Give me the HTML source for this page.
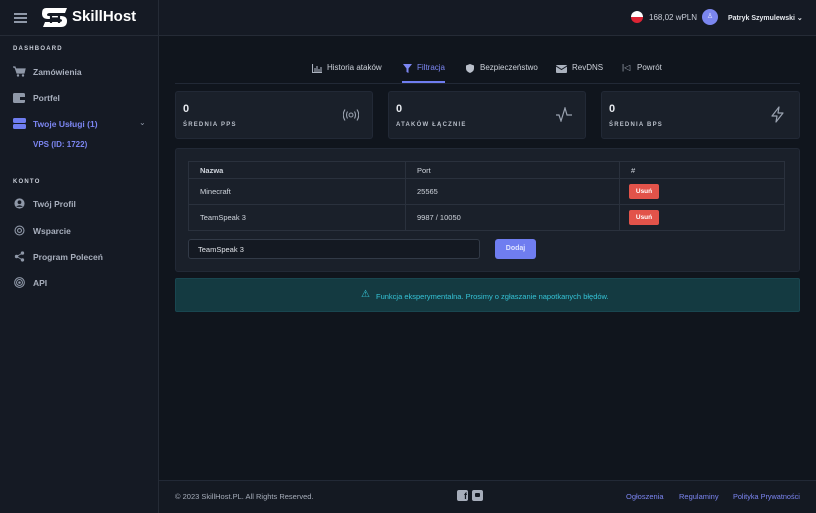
<!DOCTYPE html>
<html><head><meta charset="utf-8"><style>
*{box-sizing:border-box;margin:0;padding:0}
body{width:816px;height:513px;background:#10151d;font-family:"Liberation Sans",sans-serif;color:#d5d9e0;position:relative;overflow:hidden;font-size:8px}
.abs{position:absolute}
#side{left:0;top:0;width:159px;height:513px;background:#151a24;border-right:1px solid #252b36}
#hdr{left:159px;top:0;width:657px;height:36px;background:#151a24;border-bottom:1px solid #252b36}
.sec{font-size:6px;font-weight:bold;letter-spacing:1.2px;color:#c9ced8}
.it{font-size:8.5px;font-weight:bold;color:#a8afbd;left:33px}
.ic{left:13px;width:13px;height:11px;color:#8f98a8}
.card{background:#1a202a;border:1px solid #222936;border-radius:3px}
.num{font-size:11px;font-weight:bold;color:#e6e9ee}
.lbl{font-size:6px;font-weight:bold;letter-spacing:1.2px;color:#b9bfca}
td{border:1px solid #2a313d;font-size:7.5px;color:#cfd4dc;padding-left:11px}
table{border-collapse:collapse}
.btn{background:#e2534a;color:#fff;font-size:6.5px;font-weight:bold;width:30px;height:15px;border-radius:2px;text-align:center;line-height:15px;display:inline-block}
.tab{font-size:8px;color:#cdd2da;top:63px}
</style></head><body>
<div id="side" class="abs">
 <div class="abs" style="left:14px;top:13px;width:13px;height:1.5px;background:#8f98a8;box-shadow:0 4px 0 #8f98a8,0 8px 0 #8f98a8"></div>
 <svg class="abs" style="left:42px;top:8px" width="26" height="19" viewBox="0 0 26 19">
  <path d="M4 0H25L23 5H8Q5 5 5 7Q5 8 8 8H19Q25 8 25 13Q25 19 19 19H1L3 14H17Q20 14 20 12.5Q20 11 17 11H6Q0 11 0 5.5Q0 0 4 0Z" fill="#fff"/>
  <path d="M9 6.5V15M17 6.5V15M9 10.5H17" stroke="#151a24" stroke-width="2.2"/>
 </svg>
 <div class="abs" style="left:72px;top:8px;font-size:15px;font-weight:bold;color:#fff">SkillHost</div>
 <div class="abs" style="left:0;top:35px;width:158px;height:1px;background:#252b36"></div>
 <div class="abs sec" style="left:13px;top:46px">DASHBOARD</div>
 <svg class="abs ic" style="top:66px" viewBox="0 0 13 11"><path d="M0 1h2l2 6h7l1-4H3" stroke="#8f98a8" fill="#8f98a8" stroke-width="1.2"/><circle cx="5" cy="9.5" r="1.2" fill="#8f98a8"/><circle cx="10" cy="9.5" r="1.2" fill="#8f98a8"/></svg>
 <div class="abs it" style="top:67px">Zamówienia</div>
 <svg class="abs ic" style="top:92px" viewBox="0 0 13 11"><rect x="0" y="1" width="12" height="10" rx="1.5" fill="#8f98a8"/><rect x="7" y="5" width="6" height="3" fill="#151a24"/></svg>
 <div class="abs it" style="top:93px">Portfel</div>
 <svg class="abs ic" style="top:118px" viewBox="0 0 13 11"><rect x="0" y="0" width="13" height="5" rx="1.5" fill="#6f7df0"/><rect x="0" y="6" width="13" height="5" rx="1.5" fill="#6f7df0"/></svg>
 <div class="abs it" style="top:119px;color:#7c86f2">Twoje Usługi (1)</div>
 <div class="abs" style="left:139px;top:118px;color:#8f98a8;font-size:8px">⌄</div>
 <div class="abs" style="left:33px;top:140px;font-size:8px;color:#7c86f2;font-weight:bold">VPS (ID: 1722)</div>
 <div class="abs sec" style="left:13px;top:179px">KONTO</div>
 <svg class="abs ic" style="top:198px" viewBox="0 0 13 13"><circle cx="6.5" cy="6.5" r="6" fill="#8f98a8"/><circle cx="6.5" cy="5" r="2.2" fill="#151a24"/><path d="M2.5 10.5q4-4 8 0" fill="#151a24"/></svg>
 <div class="abs it" style="top:199px">Twój Profil</div>
 <svg class="abs ic" style="top:225px" viewBox="0 0 13 13"><circle cx="6.5" cy="6.5" r="5.3" fill="none" stroke="#8f98a8" stroke-width="1.3"/><circle cx="6.5" cy="6.5" r="2.3" fill="none" stroke="#8f98a8" stroke-width="1.3"/></svg>
 <div class="abs it" style="top:226px">Wsparcie</div>
 <svg class="abs ic" style="top:251px" viewBox="0 0 13 13"><circle cx="10" cy="2.5" r="2" fill="#8f98a8"/><circle cx="3" cy="6.5" r="2" fill="#8f98a8"/><circle cx="10" cy="10.5" r="2" fill="#8f98a8"/><path d="M10 2.5L3 6.5l7 4" stroke="#8f98a8" fill="none"/></svg>
 <div class="abs it" style="top:252px">Program Poleceń</div>
 <svg class="abs ic" style="top:277px" viewBox="0 0 13 13"><circle cx="6.5" cy="6.5" r="1.5" fill="#8f98a8"/><circle cx="6.5" cy="6.5" r="3.5" fill="none" stroke="#8f98a8" stroke-width="1.2"/><circle cx="6.5" cy="6.5" r="5.7" fill="none" stroke="#8f98a8" stroke-width="1.2"/></svg>
 <div class="abs it" style="top:278px">API</div>
</div>
<div id="hdr" class="abs">
 <div class="abs" style="left:472px;top:11px;width:12px;height:12px;border-radius:50%;background:linear-gradient(#fff 50%,#dc2434 50%)"></div>
 <div class="abs" style="left:490px;top:13px;font-size:8px;color:#c9ced8">168,02 wPLN</div>
 <div class="abs" style="left:543px;top:9px;width:16px;height:16px;border-radius:50%;background:#7b86ef;color:#dfe2ff;font-size:7px;text-align:center;line-height:16px">♙</div>
 <div class="abs" style="left:569px;top:14px;font-size:7px;font-weight:bold;color:#e6e9ee">Patryk Szymulewski ⌄</div>
</div>
<svg class="abs" style="left:312px;top:64px" width="10" height="9" viewBox="0 0 10 9"><path d="M0.5 0v8.5H10M3 8V4M5 8V2M7 8V5M9 8V3" stroke="#aab1bd" stroke-width="1.1" fill="none"/></svg>
<div class="abs tab" style="left:327px">Historia ataków</div>
<svg class="abs" style="left:403px;top:64px" width="9" height="9" viewBox="0 0 9 9"><path d="M0 0h9L5.5 4.5V9L3.5 8V4.5z" fill="#7c86f2"/></svg>
<div class="abs tab" style="left:417px;color:#7c86f2">Filtracja</div>
<div class="abs" style="left:402px;top:81px;width:43px;height:2px;background:#6f7df0"></div>
<svg class="abs" style="left:466px;top:64px" width="8" height="9" viewBox="0 0 8 9"><path d="M4 0L8 1.5V4.5Q8 7.5 4 9Q0 7.5 0 4.5V1.5z" fill="#b9bfca"/></svg>
<div class="abs tab" style="left:480px">Bezpieczeństwo</div>
<svg class="abs" style="left:556px;top:64px" width="11" height="9" viewBox="0 0 11 9"><rect x="0" y="1" width="11" height="8" rx="1" fill="#aab1bd"/><path d="M0 2l5.5 3.5L11 2" stroke="#151a24" fill="none"/></svg>
<div class="abs tab" style="left:572px">RevDNS</div>
<div class="abs tab" style="left:622px;color:#aab1bd">|◁</div>
<div class="abs tab" style="left:637px">Powrót</div>
<div class="abs" style="left:175px;top:83px;width:625px;height:1px;background:#222936"></div>

<div class="abs card" style="left:175px;top:91px;width:198px;height:48px"></div>
<div class="abs card" style="left:388px;top:91px;width:198px;height:48px"></div>
<div class="abs card" style="left:601px;top:91px;width:199px;height:48px"></div>
<div class="abs num" style="left:183px;top:103px">0</div><div class="abs lbl" style="left:183px;top:122px">ŚREDNIA PPS</div>
<div class="abs num" style="left:396px;top:103px">0</div><div class="abs lbl" style="left:396px;top:122px">ATAKÓW ŁĄCZNIE</div>
<div class="abs num" style="left:609px;top:103px">0</div><div class="abs lbl" style="left:609px;top:122px">ŚREDNIA BPS</div>
<svg class="abs" style="left:343px;top:108px" width="16" height="14" viewBox="0 0 16 14"><circle cx="8" cy="7" r="2" fill="none" stroke="#9aa2b0"/><path d="M4.5 3.5q-2 3.5 0 7M11.5 3.5q2 3.5 0 7M2 1.5q-3.5 5.5 0 11M14 1.5q3.5 5.5 0 11" stroke="#9aa2b0" fill="none" stroke-width="1.1"/></svg>
<svg class="abs" style="left:556px;top:107px" width="17" height="15" viewBox="0 0 17 15"><path d="M0 8h3l2 6 4-13 2 7h5" stroke="#9aa2b0" fill="none" stroke-width="1.2"/></svg>
<svg class="abs" style="left:770px;top:106px" width="15" height="17" viewBox="0 0 15 17"><path d="M9 1L2 10h5l-1 6 7-9H8z" stroke="#9aa2b0" fill="none" stroke-width="1.2" stroke-linejoin="round"/></svg>

<div class="abs card" style="left:175px;top:148px;width:625px;height:124px"></div>
<table class="abs" style="left:188px;top:161px;width:597px">
<tr style="height:17px"><td style="width:217px;font-weight:bold">Nazwa</td><td style="width:214px">Port</td><td>#</td></tr>
<tr style="height:26px"><td style="vertical-align:top;padding-top:8px">Minecraft</td><td style="vertical-align:top;padding-top:8px">25565</td><td style="padding-left:9px"><span class="btn">Usuń</span></td></tr>
<tr style="height:26px"><td style="vertical-align:top;padding-top:8px">TeamSpeak 3</td><td style="vertical-align:top;padding-top:8px">9987 / 10050</td><td style="padding-left:9px"><span class="btn">Usuń</span></td></tr>
</table>
<div class="abs" style="left:188px;top:239px;width:292px;height:20px;border:1px solid #323a47;border-radius:3px;background:#141922;font-size:7.5px;color:#e0e3e8;padding:5px 0 0 9px">TeamSpeak 3</div>
<div class="abs" style="left:495px;top:239px;width:41px;height:20px;border-radius:3px;background:#6f7df0;color:#dfe3ff;font-size:7px;font-weight:bold;text-align:center;line-height:20px">Dodaj</div>

<div class="abs" style="left:175px;top:278px;width:625px;height:34px;background:#143a41;border-radius:2px;border:1px solid #194650"></div>
<div class="abs" style="left:361px;top:289px;font-size:10px;color:#35c3d6">⚠</div>
<div class="abs" style="left:376px;top:292px;font-size:7.5px;color:#35c3d6">Funkcja eksperymentalna. Prosimy o zgłaszanie napotkanych błędów.</div>

<div class="abs" style="left:159px;top:480px;width:657px;height:33px;background:#141922;border-top:1px solid #222936"></div>
<div class="abs" style="left:175px;top:492px;font-size:7.5px;color:#a6adba">© 2023 SkillHost.PL. All Rights Reserved.</div>
<div class="abs" style="left:457px;top:490px;width:11px;height:11px;border-radius:2px;background:#a6adba;color:#141922;font-size:9px;font-weight:bold;text-align:right;line-height:13px;padding-right:1px">f</div>
<div class="abs" style="left:472px;top:490px;width:11px;height:11px;border-radius:2px;background:#a6adba"><div style="margin:3px 0 0 3px;width:5px;height:4px;background:#141922;border-radius:1px"></div></div>
<div class="abs" style="left:626px;top:492px;font-size:7.5px;color:#7c86f2">Ogłoszenia</div>
<div class="abs" style="left:679px;top:492px;font-size:7.5px;color:#7c86f2">Regulaminy</div>
<div class="abs" style="left:733px;top:492px;font-size:7.3px;color:#7c86f2">Polityka Prywatności</div>
</body></html>
